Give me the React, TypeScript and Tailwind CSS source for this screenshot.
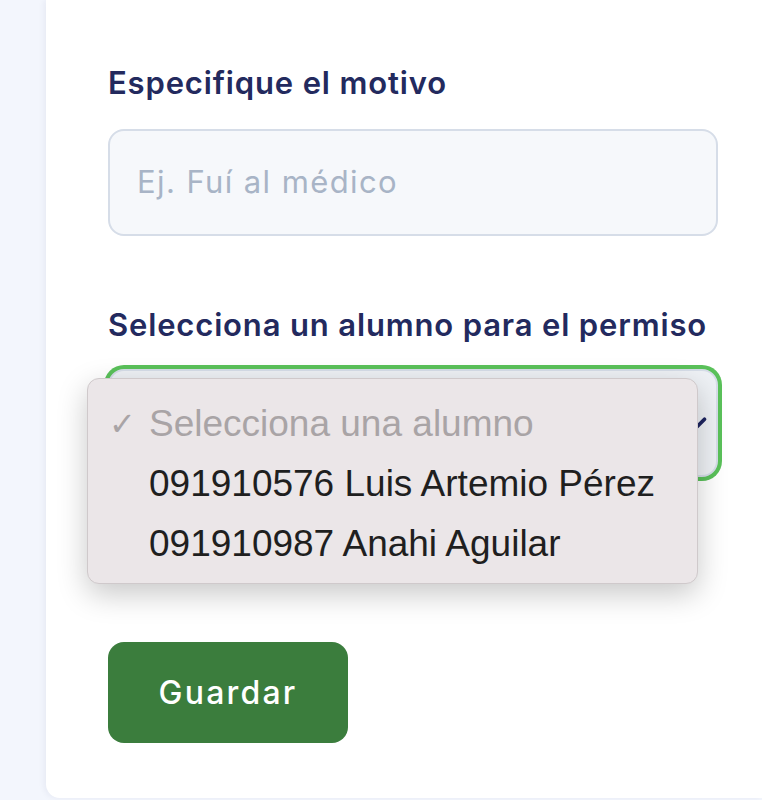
import { ChevronDown } from 'lucide-react';

const alumnos = [
  { id: '091910576', nombre: 'Luis Artemio Pérez' },
  { id: '091910987', nombre: 'Anahi Aguilar' },
];

export default function App() {
  return (
    <div className="flex h-[800px] w-full bg-[#f3f6fd] pl-[46px] pb-[2px] font-['Inter',sans-serif]">
      <div className="flex-1 rounded-bl-[14px] bg-white pl-[62px] pt-[65px] shadow-[-2px_0_6px_rgba(30,40,90,0.06)]">
        <div className="flex w-[610px] flex-col">
          <label className="text-[31px] font-semibold leading-[36px] tracking-[0.85px] text-[#232a5e]">
            Especifique el motivo
          </label>
          <div className="mt-[28px] flex h-[107px] items-center rounded-[16px] border-2 border-[#d6dde8] bg-[#f6f8fb] px-[27px]">
            <span className="text-[31px] tracking-[1.4px] text-[#a8b4c6]">Ej. Fuí al médico</span>
          </div>

          <label className="mt-[71px] text-[31px] font-semibold leading-[36px] tracking-[0.85px] text-[#232a5e]">
            Selecciona un alumno para el permiso
          </label>
          <div className="relative mt-[26px] h-[108px] rounded-[16px] border-2 border-[#d6dde8] bg-[#eef1f5] ring-[4px] ring-[#5ac15a]">
            <ChevronDown className="absolute right-[4px] top-[37px] h-[30px] w-[30px] text-[#1e2560]" strokeWidth={3} />
            <div className="absolute left-[-23px] top-[7px] w-[611px] rounded-[12px] border border-[#cfc9cb] bg-[#ebe6e8] pb-[9px] pt-[15px] font-['Liberation_Sans',Arial,sans-serif] text-[37px] shadow-[0_10px_30px_rgba(0,0,0,0.22)]">
              <div className="relative flex h-[60px] items-center pl-[61px] text-[#a9a4a6]">
                <span className="absolute left-[21px] text-[32px]">✓</span>
                Selecciona una alumno
              </div>
              {alumnos.map((a) => (
                <div key={a.id} className="flex h-[60px] items-center pl-[61px] text-[#1f1f1f]">
                  {a.id} {a.nombre}
                </div>
              ))}
            </div>
          </div>

          <button className="mt-[165px] flex h-[101px] w-[240px] items-center justify-center rounded-[16px] bg-[#3b7d3d] text-[32px] font-medium tracking-[2.2px] text-white">
            Guardar
          </button>
        </div>
      </div>
    </div>
  );
}
